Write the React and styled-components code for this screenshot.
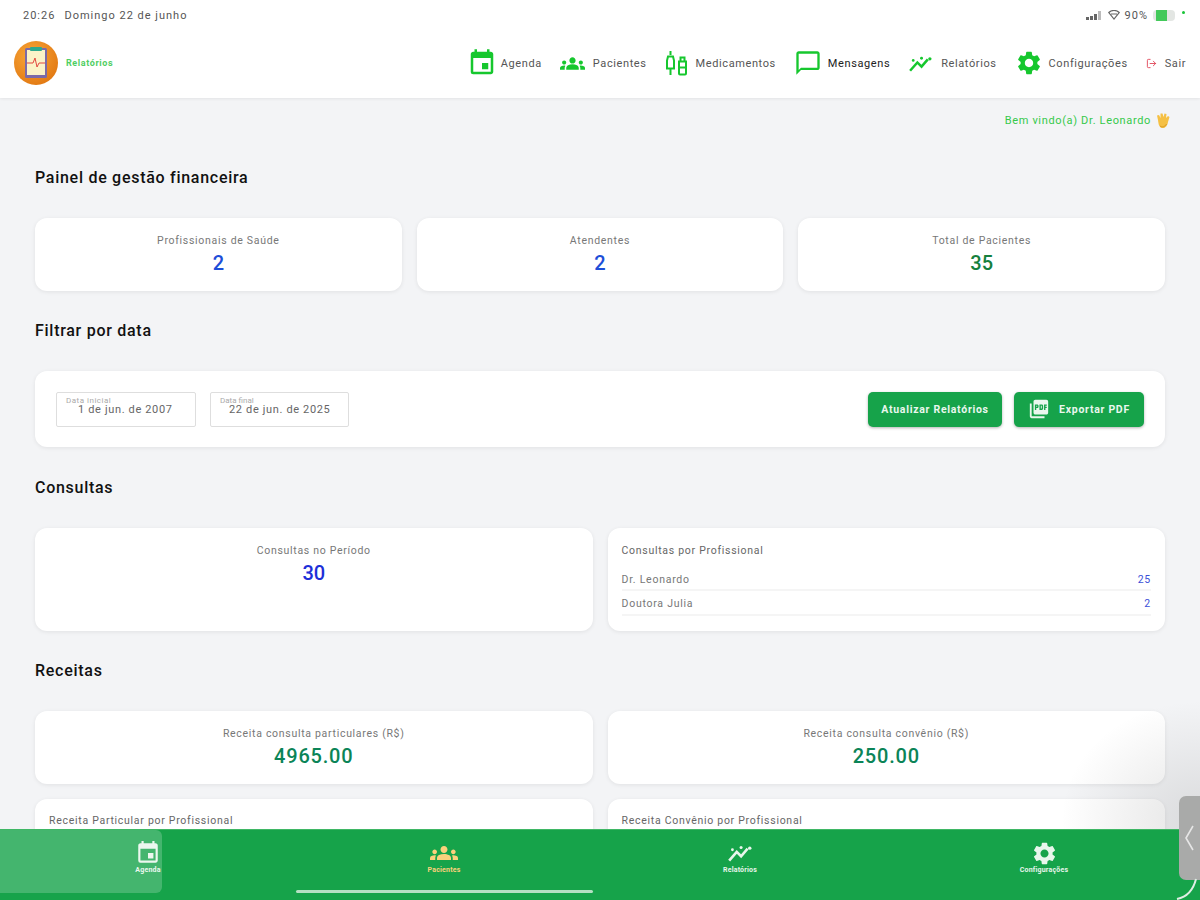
import React from 'react'
import styled, { createGlobalStyle } from 'styled-components'
import { MdEvent, MdGroups, MdChatBubbleOutline, MdSettings, MdPictureAsPdf } from 'react-icons/md'
import { LuLogOut } from 'react-icons/lu'

const GREEN = '#16a34a'
const NAV_GREEN = '#16c72e'

const GlobalStyle = createGlobalStyle`
    html, body { margin: 0; padding: 0; height: 100%; overflow: hidden; }
    body { background: #f3f4f6; font-family: Roboto, "Liberation Sans", sans-serif; color: #111; }
    * { box-sizing: border-box; }
`

const Page = styled.div`
    width: 1200px;
    height: 900px;
    overflow: hidden;
    position: relative;
    background: #f3f4f6;
`

const Header = styled.header`
    height: 98px;
    background: #fff;
    box-shadow: 0 1px 3px rgba(0, 0, 0, .07);
`

const StatusBar = styled.div`
    height: 30px;
    padding: 0 15px 0 23px;
    display: flex;
    align-items: center;
    justify-content: space-between;
    font-size: 11px;
    letter-spacing: 1px;
    color: #555;
`

const StatusGroup = styled.div`
    display: flex;
    align-items: center;
    gap: ${p => p.$gap || 9}px;
`

const Battery = styled.span`
    width: 22px;
    height: 11px;
    border-radius: 4px;
    background: linear-gradient(90deg, #e3e6e3 0 15%, #43c95a 15% 65%, #e3e6e3 65%);
`

const GreenDot = styled.span`
    width: 3px;
    height: 3px;
    margin: -6px 0 0 2px;
    background: #18c437;
    border-radius: 50%;
`

const TopRow = styled.div`
    height: 66px;
    padding: 0 14px;
    display: flex;
    align-items: center;
    justify-content: space-between;
`

const Brand = styled.div`
    display: flex;
    align-items: center;
    gap: 8px;
    font-size: 9px;
    font-weight: 700;
    letter-spacing: .6px;
    color: #4fce62;
`

const Nav = styled.nav`
    display: flex;
    align-items: center;
    gap: 18px;
`

const NavItem = styled.a`
    display: flex;
    align-items: center;
    gap: ${p => p.$gap || 8}px;
    font-size: 11px;
    letter-spacing: .6px;
    color: ${p => p.$dark ? '#222' : '#555'};
    svg { color: ${NAV_GREEN}; flex-shrink: 0; }
`

const LogoutIcon = styled(LuLogOut)`
    && { color: #e0485a; }
`

const Main = styled.main`
    padding: 12px 35px 0;
    display: flex;
    flex-direction: column;
`

const Welcome = styled.div`
    height: 20px;
    margin-right: -6px;
    display: flex;
    align-items: center;
    justify-content: flex-end;
    gap: 4px;
    font-size: 11px;
    letter-spacing: .65px;
    color: #35c94a;
`

const SectionTitle = styled.h2`
    margin: ${p => p.$top || 30}px 0 30px;
    height: 20px;
    line-height: 20px;
    font-size: 16px;
    font-weight: 500;
    letter-spacing: .72px;
    color: #111;
`

const Row = styled.div`
    display: grid;
    grid-template-columns: repeat(${p => p.$cols}, 1fr);
    gap: 15px;
`

const Card = styled.div`
    background: #fff;
    border-radius: 12px;
    box-shadow: 0 1px 4px rgba(0, 0, 0, .08);
`

const StatCard = styled(Card)`
    height: ${p => p.$height || 73}px;
    padding-top: 16px;
    text-align: center;
`

const StatLabel = styled.div`
    font-size: 10.5px;
    line-height: 14px;
    letter-spacing: .7px;
    color: #777;
`

const StatValue = styled.div`
    margin-top: 3px;
    font-size: 20px;
    line-height: 24px;
    font-weight: 500;
    letter-spacing: ${p => p.$spaced ? '.8px' : '0'};
    color: ${p => p.$color};
`

const FilterCard = styled(Card)`
    height: 76px;
    padding: 0 21px;
    display: flex;
    align-items: center;
    justify-content: space-between;
`

const Group = styled.div`
    display: flex;
    align-items: center;
    gap: ${p => p.$gap}px;
`

const DateField = styled.div`
    position: relative;
    width: ${p => p.$width}px;
    height: 35px;
    padding: 9px 0 0 ${p => p.$pad}px;
    border: 1px solid #dedede;
    border-radius: 2px;
    font-size: 11px;
    line-height: 16px;
    letter-spacing: .65px;
    color: #666;
`

const DateLabel = styled.span`
    position: absolute;
    top: 0;
    left: 9px;
    font-size: 8px;
    letter-spacing: ${p => p.$spacing || 0}px;
    color: #aaa;
`

const GreenButton = styled.button`
    width: ${p => p.$width}px;
    height: 35px;
    padding: 0;
    display: flex;
    align-items: center;
    justify-content: center;
    gap: 9px;
    border: 0;
    border-radius: 5px;
    background: ${GREEN};
    box-shadow: 0 1px 3px rgba(0, 0, 0, .3);
    color: #eaf7ee;
    font-family: inherit;
    font-size: 10.5px;
    font-weight: 700;
    letter-spacing: .72px;
`

const ListCard = styled(Card)`
    height: 103px;
    padding: 16px 14px 0 14px;
`

const ListTitle = styled.div`
    height: 14px;
    margin-bottom: ${p => p.$gap || 0}px;
    line-height: 14px;
    font-size: 10.5px;
    letter-spacing: .72px;
    color: #666;
`

const ListRow = styled.div`
    height: 25px;
    padding-top: ${p => p.$pad}px;
    display: flex;
    justify-content: space-between;
    border-bottom: 2px solid #f5f5f5;
    font-size: 10.5px;
    line-height: 14px;
    letter-spacing: .75px;
    color: #777;
`

const ListValue = styled.span`
    color: #3b4fd8;
`

const CutCard = styled(Card)`
    height: 80px;
    padding: 15px 14px 0;
`

const BottomBar = styled.footer`
    position: absolute;
    left: 0;
    right: 0;
    bottom: 0;
    height: 71px;
    display: flex;
    background: ${GREEN};
    border-top: 1px solid #3fb765;
`

const Tab = styled.div`
    flex: ${p => p.$grow ? '1' : '0 0 296px'};
    padding-top: 10px;
    display: flex;
    flex-direction: column;
    align-items: center;
    font-size: 7px;
    line-height: 8px;
    font-weight: 700;
    letter-spacing: .2px;
    color: ${p => p.$active ? '#fbd17c' : '#e8f6ec'};
`

const TabIcon = styled.div`
    height: 26px;
    display: flex;
    align-items: center;
    justify-content: center;
`

const Ripple = styled.div`
    position: absolute;
    left: 0;
    top: 0;
    width: 162px;
    height: 63px;
    background: rgba(255, 255, 255, .2);
    border-radius: 0 6px 6px 0;
`

const HomeIndicator = styled.div`
    position: absolute;
    left: 296px;
    bottom: 7px;
    width: 297px;
    height: 3px;
    border-radius: 2px;
    background: #b5e0c3;
`

const EdgeGlow = styled.div`
    position: absolute;
    right: 0;
    top: 700px;
    width: 140px;
    height: 200px;
    background: radial-gradient(ellipse at 100% 60%, rgba(120, 120, 120, .2), rgba(255, 255, 255, 0) 70%);
    pointer-events: none;
`

const Handle = styled.div`
    position: absolute;
    right: 0;
    top: 796px;
    width: 21px;
    height: 84px;
    display: flex;
    align-items: center;
    justify-content: center;
    border-radius: 7px 0 0 7px;
    background: #a9aaa9;
`

const Arc = styled.svg`
    position: absolute;
    right: 0;
    bottom: 0;
`

const ChartIcon = ({ size = 25, color = 'currentColor' }) => (
    <svg width={size} height={size} viewBox="0 0 24 24" fill={color}>
        <path d="M2 19 9 11l4 4 6-7" fill="none" stroke={color} strokeWidth="2.4" />
        <circle cx="5" cy="9" r="1.3" />
        <circle cx="13" cy="7" r="1.4" />
        <circle cx="21" cy="7.5" r="1.6" />
    </svg>
)

const PillIcon = () => (
    <svg width="23" height="26" viewBox="0 0 23 26" fill="none" stroke="currentColor" strokeWidth="2">
        <path d="M5.500 1v4M3 6.500h5l1 4v8H2v-8zM5.500 18.500V25" />
        <path d="M14 11.500h7v12a1 1 0 0 1-1 1h-5a1 1 0 0 1-1-1zM15.500 7.500h4v4h-4zM14 17.500h7" />
    </svg>
)

const Logo = () => (
    <svg width="44" height="44" viewBox="0 0 44 44">
        <defs>
            <radialGradient id="logoBg" cx="40%" cy="35%" r="75%">
                <stop offset="0%" stopColor="#f9a83a" />
                <stop offset="100%" stopColor="#e0750f" />
            </radialGradient>
        </defs>
        <circle cx="22" cy="22" r="22" fill="url(#logoBg)" />
        <rect x="11" y="7" width="22" height="30" rx="1.500" fill="#7b6aa8" />
        <rect x="13" y="9" width="18" height="25" fill="#fbf3c8" />
        <rect x="16" y="6" width="12" height="4" rx="1" fill="#2fa98e" />
        <path d="M13 22h6l2-5 2 9 2-4h6" fill="none" stroke="#e2473f" strokeWidth="1" />
    </svg>
)

const WaveHand = () => (
    <svg width="16" height="17" viewBox="0 0 16 17">
        <path d="M3 8 2 3.500l2-.5 1.500 3L5.500 1.500h2L8.500 5l1-3.500 2 .5L11 6l2-2 1.500 1L13 10c-.5 4-3 6.500-6 6s-3.500-4-4-8z" fill="#f5c044" />
        <path d="M5 14c2 1.500 5 1 6.500-2" fill="none" stroke="#d99a22" />
    </svg>
)

const Signal = () => (
    <svg width="17" height="9" viewBox="0 0 17 9" fill="#666">
        <rect x="0" y="6" width="3" height="3" />
        <rect x="4" y="5" width="3" height="4" />
        <rect x="8" y="3" width="3" height="6" />
        <rect x="12" y="0" width="3" height="9" fill="#bbb" />
    </svg>
)

const Wifi = () => (
    <svg width="12" height="10" viewBox="0 0 12 10" fill="none" stroke="#666" strokeWidth="1.200">
        <path d="M.8 2.500a7.500 7.500 0 0 1 10.400 0L6 9zM3 4h6" />
    </svg>
)

const navItems = [
    { label: 'Agenda', icon: <MdEvent size={30} />, gap: 4 },
    { label: 'Pacientes', icon: <MdGroups size={25} /> },
    { label: 'Medicamentos', icon: <PillIcon /> },
    { label: 'Mensagens', icon: <MdChatBubbleOutline size={28} />, dark: true, gap: 6 },
    { label: 'Relatórios', icon: <ChartIcon /> },
    { label: 'Configurações', icon: <MdSettings size={28} />, gap: 6 },
    { label: 'Sair', icon: <LogoutIcon size={11} /> }
]

const topStats = [
    { label: 'Profissionais de Saúde', value: 2, color: '#1d4ed8' },
    { label: 'Atendentes', value: 2, color: '#1d4ed8' },
    { label: 'Total de Pacientes', value: 35, color: '#15803d' }
]

const revenue = [
    { label: 'Receita consulta particulares (R$)', value: '4965.00' },
    { label: 'Receita consulta convênio (R$)', value: '250.00' }
]

const tabs = [
    { label: 'Agenda', icon: <MdEvent size={26} /> },
    { label: 'Pacientes', icon: <MdGroups size={28} />, active: true },
    { label: 'Relatórios', icon: <ChartIcon size={26} /> },
    { label: 'Configurações', icon: <MdSettings size={27} />, grow: true }
]

export default function App() {
    return (
        <Page>
            <GlobalStyle />
            <Header>
                <StatusBar>
                    <StatusGroup>
                        <span>20:26</span>
                        <span>Domingo 22 de junho</span>
                    </StatusGroup>
                    <StatusGroup $gap={5}>
                        <Signal />
                        <Wifi />
                        <span>90%</span>
                        <Battery />
                        <GreenDot />
                    </StatusGroup>
                </StatusBar>
                <TopRow>
                    <Brand>
                        <Logo />
                        <span>Relatórios</span>
                    </Brand>
                    <Nav>
                        {navItems.map(item => (
                            <NavItem key={item.label} $dark={item.dark} $gap={item.gap}>
                                {item.icon}
                                {item.label}
                            </NavItem>
                        ))}
                    </Nav>
                </TopRow>
            </Header>

            <Main>
                <Welcome>
                    Bem vindo(a) Dr. Leonardo <WaveHand />
                </Welcome>

                <SectionTitle $top={38}>Painel de gestão financeira</SectionTitle>
                <Row $cols={3}>
                    {topStats.map(stat => (
                        <StatCard key={stat.label}>
                            <StatLabel>{stat.label}</StatLabel>
                            <StatValue $color={stat.color}>{stat.value}</StatValue>
                        </StatCard>
                    ))}
                </Row>

                <SectionTitle>Filtrar por data</SectionTitle>
                <FilterCard>
                    <Group $gap={14}>
                        <DateField $width={140} $pad={21}>
                            <DateLabel $spacing={.5}>Data inicial</DateLabel>
                            1 de jun. de 2007
                        </DateField>
                        <DateField $width={139} $pad={18}>
                            <DateLabel>Data final</DateLabel>
                            22 de jun. de 2025
                        </DateField>
                    </Group>
                    <Group $gap={12}>
                        <GreenButton $width={134}>Atualizar Relatórios</GreenButton>
                        <GreenButton $width={130}>
                            <MdPictureAsPdf size={22} />
                            Exportar PDF
                        </GreenButton>
                    </Group>
                </FilterCard>

                <SectionTitle $top={31}>Consultas</SectionTitle>
                <Row $cols={2}>
                    <StatCard $height={103}>
                        <StatLabel>Consultas no Período</StatLabel>
                        <StatValue $color="#1d2fd8">30</StatValue>
                    </StatCard>
                    <ListCard>
                        <ListTitle $gap={8}>Consultas por Profissional</ListTitle>
                        <ListRow $pad={7}>
                            <span>Dr. Leonardo</span>
                            <ListValue>25</ListValue>
                        </ListRow>
                        <ListRow $pad={6}>
                            <span>Doutora Julia</span>
                            <ListValue>2</ListValue>
                        </ListRow>
                    </ListCard>
                </Row>

                <SectionTitle>Receitas</SectionTitle>
                <Row $cols={2}>
                    {revenue.map(item => (
                        <StatCard key={item.label}>
                            <StatLabel>{item.label}</StatLabel>
                            <StatValue $color="#0b8457" $spaced>{item.value}</StatValue>
                        </StatCard>
                    ))}
                    <CutCard>
                        <ListTitle>Receita Particular por Profissional</ListTitle>
                    </CutCard>
                    <CutCard>
                        <ListTitle>Receita Convênio por Profissional</ListTitle>
                    </CutCard>
                </Row>
            </Main>

            <EdgeGlow />
            <BottomBar>
                <Ripple />
                {tabs.map(tab => (
                    <Tab key={tab.label} $active={tab.active} $grow={tab.grow}>
                        <TabIcon>{tab.icon}</TabIcon>
                        {tab.label}
                    </Tab>
                ))}
                <HomeIndicator />
            </BottomBar>
            <Handle>
                <svg width="11" height="26" viewBox="0 0 11 26" fill="none" stroke="#e6e6e6" strokeWidth="1.600">
                    <path d="M9 1 2 13l7 12" />
                </svg>
            </Handle>
            <Arc width="24" height="22" viewBox="0 0 24 22" fill="none" stroke="#dfeee4" strokeWidth="2">
                <path d="M1 21c10-2 16-8 19-20" />
            </Arc>
        </Page>
    )
}
